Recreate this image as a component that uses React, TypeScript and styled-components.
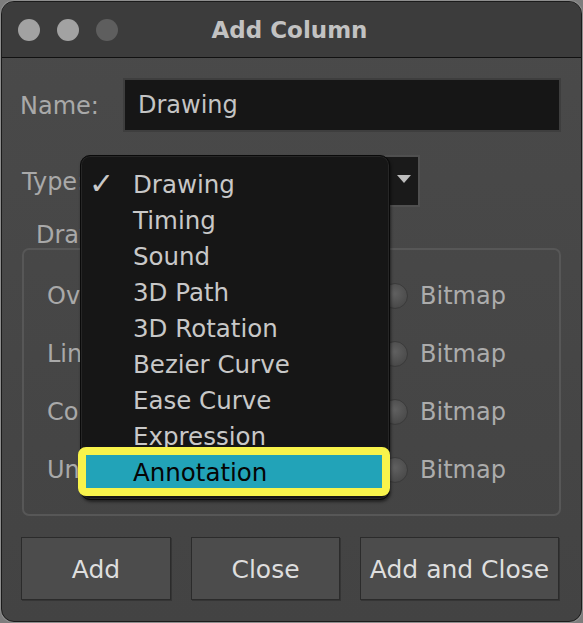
import React from "react";
import styled, { createGlobalStyle } from "styled-components";

const Global = createGlobalStyle`
  html, body { margin: 0; padding: 0; background: #7d7d7d; }
  body { font-family: "DejaVu Sans", "Liberation Sans", sans-serif; }
  * { box-sizing: border-box; }
`;

const Window = styled.div`
  position: relative;
  width: 581px;
  height: 621px;
  margin: 1px;
  border: 1px solid #1b1b1b;
  border-radius: 13px;
  overflow: hidden;
  box-shadow: 0 0 0 1px #8e8e8e;
  background: linear-gradient(#4a4a4a, #434343);
  display: flex;
  flex-direction: column;
`;

const TitleBar = styled.div`
  height: 56px;
  flex: none;
  background: #3c3c3c;
  border-bottom: 1px solid #111;
  display: grid;
  grid-template-columns: 1fr auto 1fr;
  align-items: center;
  padding-left: 16px;
`;

const Lights = styled.div`
  display: flex;
  gap: 17px;
  margin-top: 1px;
`;

const Light = styled.span<{ $dim?: boolean }>`
  width: 22px;
  height: 22px;
  border-radius: 50%;
  background: ${(p) => (p.$dim ? "#5e5e5e" : "#a2a2a2")};
`;

const Title = styled.div`
  font-size: 23px;
  font-weight: bold;
  color: #c2c2c2;
  margin-right: 20px;
`;

const Body = styled.div`
  flex: 1;
  padding: 20px 20px 0 18px;
  display: flex;
  flex-direction: column;
`;

const FieldRow = styled.div<{ $h: number; $mt?: number }>`
  display: flex;
  align-items: center;
  height: ${(p) => p.$h}px;
  margin-top: ${(p) => p.$mt ?? 0}px;
`;

const Label = styled.div<{ $w: number; $pl?: number }>`
  width: ${(p) => p.$w}px;
  flex: none;
  padding-left: ${(p) => p.$pl ?? 0}px;
  padding-top: 2px;
  font-size: 24px;
  color: #a9a9a9;
  white-space: nowrap;
  overflow: hidden;
`;

const TextInput = styled.div`
  flex: 1;
  align-self: stretch;
  display: flex;
  align-items: center;
  background: #161616;
  border: 2px solid #3e3e3e;
  padding-left: 13px;
  font-size: 24px;
  color: #c4c4c4;
`;

const Combo = styled.div`
  width: 325px;
  align-self: stretch;
  background: #1a1a1a;
  border: 2px solid #505050;
  display: flex;
  align-items: center;
  justify-content: flex-end;
  padding-right: 7px;
`;

const Arrow = styled.span`
  width: 0;
  height: 0;
  border-left: 7.5px solid transparent;
  border-right: 7.5px solid transparent;
  border-top: 8px solid #bdbdbd;
  margin-top: -4px;
`;

const GroupTitle = styled.div`
  margin-top: 15px;
  height: 26px;
  line-height: 26px;
  padding-left: 16px;
  font-size: 24px;
  color: #a9a9a9;
`;

const Group = styled.div`
  margin-left: 2px;
  border: 2px solid #575757;
  border-radius: 7px;
  padding: 17px 0 15px 23px;
  display: flex;
  flex-direction: column;
`;

const GroupRow = styled.div`
  height: 58px;
  display: flex;
  align-items: center;
`;

const RowLabel = styled.div`
  width: 335px;
  flex: none;
  font-size: 24px;
  color: #a9a9a9;
`;

const RadioOption = styled.div`
  display: flex;
  align-items: center;
  gap: 12px;
  font-size: 24px;
  color: #acacac;
`;

const Radio = styled.span`
  width: 26px;
  height: 26px;
  border-radius: 50%;
  background: radial-gradient(circle at 50% 40%, #606060, #4b4b4b 70%, #3e3e3e);
  border: 1px solid #3a3a3a;
`;

const Buttons = styled.div`
  margin-top: 21px;
  margin-left: 1px;
  display: flex;
  gap: 20px;
`;

const Button = styled.div<{ $w: number }>`
  width: ${(p) => p.$w}px;
  height: 63px;
  background: #4c4c4c;
  border: 1px solid #2b2b2b;
  box-shadow: 1px 1px 0 #353535;
  display: flex;
  align-items: center;
  justify-content: center;
  padding-top: 2px;
  font-size: 25px;
  color: #dedede;
`;

const Menu = styled.div`
  position: absolute;
  left: 78px;
  top: 153px;
  width: 310px;
  height: 345px;
  background: #161616;
  border: 1px solid #0a0a0a;
  border-radius: 10px;
  box-shadow: inset 0 0 0 1px #262626, 1px 2px 3px rgba(0, 0, 0, 0.5);
  padding-top: 10px;
  display: flex;
  flex-direction: column;
`;

const MenuItem = styled.div<{ $active?: boolean }>`
  position: relative;
  height: 36px;
  display: grid;
  grid-template-columns: 52px 1fr;
  align-items: center;
  font-size: 24.5px;
  color: ${(p) => (p.$active ? "#050505" : "#c8c8c8")};
  background: ${(p) => (p.$active ? "#22a3b8" : "transparent")};
  ${(p) =>
    p.$active
      ? `&::after {
          content: "";
          position: absolute;
          top: -7px;
          bottom: -6px;
          left: -3px;
          right: -1px;
          border: 8px solid #f8f34b;
          border-radius: 8px;
        }`
      : ""}
`;

const Check = styled.span`
  padding-left: 8px;
  font-size: 30px;
  line-height: 1;
  color: #c8c8c8;
`;

const items = [
  "Drawing",
  "Timing",
  "Sound",
  "3D Path",
  "3D Rotation",
  "Bezier Curve",
  "Ease Curve",
  "Expression",
  "Annotation",
];

const rows = ["Overlay", "Line Art", "Colour Art", "Underlay"];

export default function App() {
  return (
    <>
      <Global />
      <Window>
        <TitleBar>
          <Lights>
            <Light />
            <Light />
            <Light $dim />
          </Lights>
          <Title>Add Column</Title>
          <div />
        </TitleBar>
        <Body>
          <FieldRow $h={54}>
            <Label $w={103}>Name:</Label>
            <TextInput>Drawing</TextInput>
          </FieldRow>
          <FieldRow $h={52} $mt={23}>
            <Label $w={75} $pl={2}>Type:</Label>
            <Combo>
              <Arrow />
            </Combo>
          </FieldRow>
          <GroupTitle>Drawing Layers</GroupTitle>
          <Group>
            {rows.map((r) => (
              <GroupRow key={r}>
                <RowLabel>{r}</RowLabel>
                <RadioOption>
                  <Radio />
                  Bitmap
                </RadioOption>
              </GroupRow>
            ))}
          </Group>
          <Buttons>
            <Button $w={150}>Add</Button>
            <Button $w={149}>Close</Button>
            <Button $w={199}>Add and Close</Button>
          </Buttons>
        </Body>
        <Menu>
          {items.map((it, i) => (
            <MenuItem key={it} $active={it === "Annotation"}>
              {i === 0 ? <Check>✓</Check> : <span />}
              <span>{it}</span>
            </MenuItem>
          ))}
        </Menu>
      </Window>
    </>
  );
}
